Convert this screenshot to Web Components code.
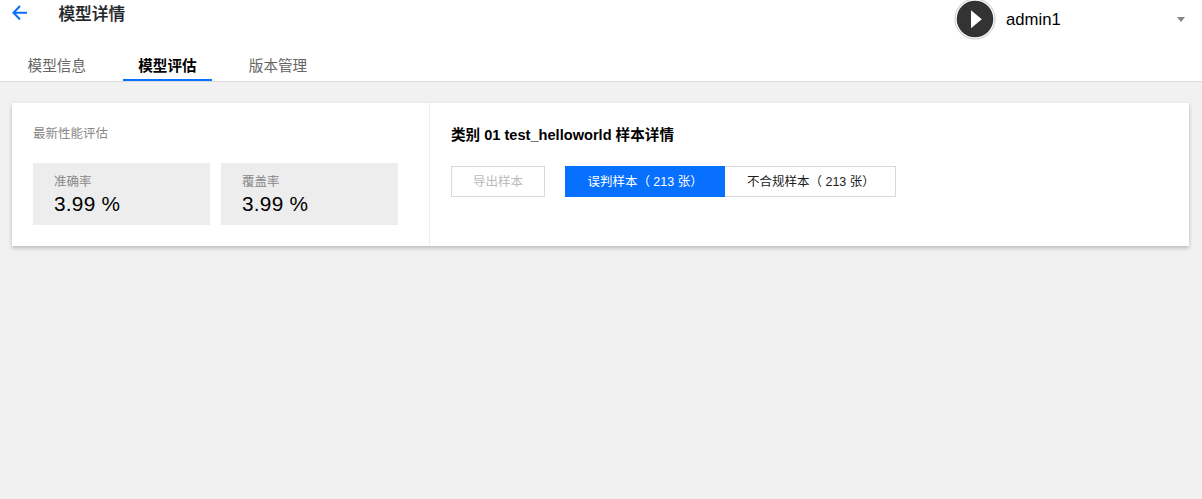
<!DOCTYPE html>
<html lang="zh-CN">
<head>
<meta charset="utf-8">
<title>模型详情</title>
<style>
html,body{margin:0;height:100%;background:#f1f1f1;overflow:hidden}
body{font-family:"Liberation Sans","Noto Sans CJK SC",sans-serif;color:#000;font-size:12.5px}
</style>
</head>
<body>
<model-page></model-page>
<script>
function define(name, html) {
  const template = document.createElement('template');
  template.innerHTML = html;
  customElements.define(name, class extends HTMLElement {
    constructor() {
      super();
      this.attachShadow({ mode: 'open' }).append(template.content.cloneNode(true));
    }
  });
}

define('user-menu', `<style>
:host{display:flex;align-items:center;width:234px;height:41px;font-size:16.7px;line-height:20px;margin-top:-2px}
.avatar{display:block;width:42px;height:42px;flex:none}
.name{margin-left:10px;padding-top:2px;flex:1}
.caret{display:block;width:8px;height:5px;margin:2px 3px 0 0}
</style>
<svg class="avatar" viewBox="0 0 42 42"><circle cx="21" cy="21" r="20" fill="#fff" stroke="#d2d2d2" stroke-width="1.2"/><circle cx="21" cy="21" r="18.3" fill="#333"/><path d="M17 12.3 27.8 21.3 17 30.3Z" fill="#fff"/></svg>
<span class="name"><slot></slot></span>
<svg class="caret" viewBox="0 0 8 5"><path d="M0 0H8L4 5Z" fill="#858585"/></svg>`);

define('page-header', `<style>
:host{display:block;background:#fff;height:81px;border-bottom:1px solid #dcdcdc}
.top{display:flex;height:49px;padding:0 14px 0 12px;align-items:flex-start}
.back{display:block;width:16px;height:16px;margin-top:5px}
h1{font-size:16.7px;line-height:24px;margin:3px 0 0 30.4px;font-weight:500;color:#1f2429;-webkit-text-stroke:.2px #1f2429}
user-menu{margin-left:auto}
nav{display:flex;gap:21px;padding-left:12px;height:32px}
</style>
<div class="top">
<svg class="back" viewBox="0 0 16 16" fill="none" stroke="#0870ff" stroke-width="2"><path d="M8 1 1.5 7.7 8 14.5M1.7 7.7H15"/></svg>
<h1><slot></slot></h1><user-menu>admin1</user-menu></div>
<nav><slot name="tabs"></slot></nav>`);

define('tab-item', `<style>
:host{display:block;box-sizing:border-box;width:89.6px;height:32px;text-align:center;font-size:14.6px;line-height:34px;color:#666}
:host([active]){font-weight:700;color:#000;border-bottom:2px solid #0870ff}
</style><slot></slot>`);

define('stat-box', `<style>
:host{display:block;box-sizing:border-box;width:177px;height:62px;background:#ededed;padding:10px 21px 0;color:#888;line-height:18px}
.value{font-size:20.8px;line-height:25px;color:#000;letter-spacing:.25px}
</style><div><slot></slot></div><div class="value"><slot name="value"></slot></div>`);

define('action-button', `<style>
:host{display:block;box-sizing:border-box;height:31px;border:1px solid #d9d9d9;padding:0 0 0 21px;line-height:31px;background:#fff;color:#1d1d1d;white-space:nowrap;width:171px}
:host([disabled]){width:94px;color:#bbb}
:host([active]){width:160px;color:#fff;background:#0870ff;border-color:#0870ff}
</style><slot></slot>`);

define('evaluation-card', `<style>
:host{display:flex;height:143px;background:#fff;margin:21px 12.6px 0 12.4px;box-shadow:0 2px 4px rgba(0,0,0,.24)}
.summary{box-sizing:border-box;width:417.6px;border-right:1px solid #ededed;padding:21px 0 0 20.6px}
.label{line-height:20px;color:#888}
.stats{display:flex;gap:11px;margin-top:19px}
.detail{padding:21px 0 0 21px}
h2{font-size:14.6px;line-height:22px;margin:0;font-weight:700}
.actions{display:flex;margin-top:20px}
.group{display:flex;margin-left:20.4px}
.group action-button:last-child{border-left:0;padding-left:21.6px;width:170.6px}
</style>
<section class="summary"><div class="label">最新性能评估</div><div class="stats">
<stat-box>准确率<span slot="value">3.99 %</span></stat-box><stat-box>覆盖率<span slot="value">3.99 %</span></stat-box></div></section>
<section class="detail"><h2>类别 01 test_helloworld 样本详情</h2><div class="actions"><action-button disabled>导出样本</action-button><div class="group"><action-button active>误判样本（ 213 张）</action-button><action-button>不合规样本（ 213 张）</action-button></div></div></section>`);

define('model-page', `<style>:host{display:block}</style>
<page-header>模型详情<tab-item slot="tabs">模型信息</tab-item><tab-item slot="tabs" active>模型评估</tab-item><tab-item slot="tabs">版本管理</tab-item></page-header>
<evaluation-card></evaluation-card>`);
</script>
</body>
</html>
